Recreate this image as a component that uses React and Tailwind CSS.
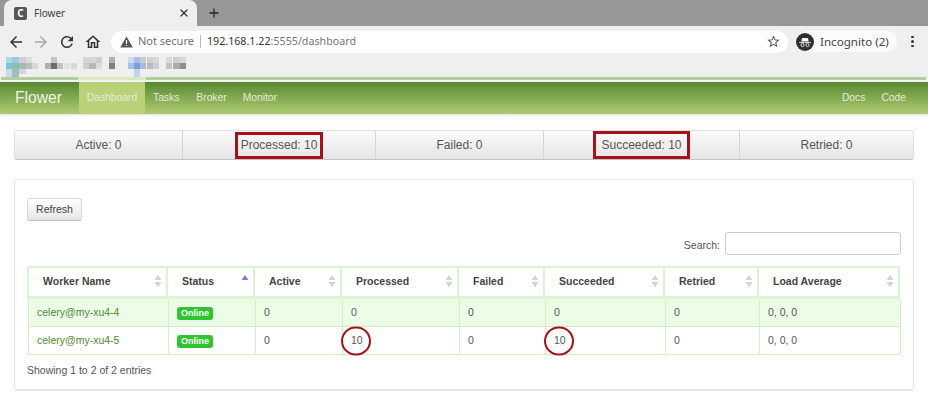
import { X, Plus } from "lucide-react";

const STATS = [
  { label: "Active: 0", width: "w-[168px]" },
  { label: "Processed: 10", width: "w-[193px]", marked: "h-[27px] w-[88px]" },
  { label: "Failed: 0", width: "w-[168px]" },
  { label: "Succeeded: 10", width: "w-[196px]", marked: "h-[28px] w-[97px]" },
  { label: "Retried: 0", width: "flex-1" },
];

const COLUMNS = [
  { label: "Worker Name", width: "w-[141px]" },
  { label: "Status", width: "w-[87px]", sorted: true },
  { label: "Active", width: "w-[87px]" },
  { label: "Processed", width: "w-[117px]" },
  { label: "Failed", width: "w-[86px]" },
  { label: "Succeeded", width: "w-[120px]" },
  { label: "Retried", width: "w-[94px]" },
  { label: "Load Average", width: "w-[141px]" },
];

const WORKERS = [
  { name: "celery@my-xu4-4", processed: "0", succeeded: "0", marked: false, bg: "bg-[#ecfde7]" },
  { name: "celery@my-xu4-5", processed: "10", succeeded: "10", marked: true, bg: "bg-white" },
];

// blurred bookmark bar, [x, y, w, h, colour]
const BLUR = [
  [6, 0, 6, 6, "#a9dbe6"], [12, 0, 7, 6, "#9ccbdc"], [19, 0, 7, 6, "#cfcfcf"], [26, 0, 6, 6, "#dedede"],
  [6, 6, 6, 6, "#7fc3d8"], [12, 6, 7, 6, "#82c6a6"], [19, 6, 7, 6, "#a8b8b8"], [26, 6, 6, 6, "#bdbdbd"], [32, 6, 6, 6, "#d8d8d8"],
  [12, 12, 7, 8, "#9dbcc4"], [6, 12, 6, 8, "#c7dde3"], [19, 12, 7, 5, "#cfd8d8"],
  [51, 0, 6, 6, "#c4c4c4"], [45, 6, 6, 6, "#b0b0b0"], [51, 6, 6, 6, "#6d6d6d"], [57, 6, 6, 6, "#c2c2c2"], [64, 6, 6, 6, "#e2e2e2"], [71, 6, 6, 6, "#d8d8d8"],
  [83, 0, 6, 6, "#d4d4d4"], [89, 0, 7, 6, "#d8d8d8"], [96, 0, 6, 6, "#cdcdcd"], [83, 6, 6, 6, "#d0d0d0"], [89, 6, 7, 6, "#b8b8b8"], [96, 6, 6, 6, "#dcdcdc"],
  [109, 0, 6, 6, "#b0b0b0"], [109, 6, 6, 6, "#7e7e7e"],
  [128, 0, 6, 6, "#cfdcf0"], [134, 0, 6, 6, "#a8c0e4"], [140, 0, 6, 6, "#c0cce0"], [147, 0, 6, 6, "#d0d0d0"], [153, 0, 6, 6, "#d8d8d8"],
  [128, 6, 6, 6, "#a8bfe6"], [134, 6, 6, 6, "#7d9fd8"], [140, 6, 6, 6, "#a9bcdc"], [147, 6, 6, 6, "#bcbcbc"], [153, 6, 6, 6, "#cecece"],
  [134, 12, 6, 8, "#c4d4ee"], [166, 0, 6, 6, "#dadada"], [173, 0, 7, 6, "#cfcfcf"], [180, 0, 6, 6, "#d8d8d8"],
  [166, 6, 6, 6, "#c4c4c4"], [173, 6, 7, 6, "#ababab"], [180, 6, 6, 6, "#8f8f8f"],
];

function Icon({ d, size = 16, className }) {
  return (
    <svg width={size} height={size} viewBox="0 0 24 24" fill="currentColor" className={className}>
      <path d={d} />
    </svg>
  );
}

function SortArrows({ sorted }) {
  return (
    <svg width="8" height="13" viewBox="0 0 8 13" className="shrink-0">
      <path d="M4 0 L7.5 5 H0.5 Z" fill={sorted ? "#7b82d6" : "#d4d4d4"} />
      {!sorted && <path d="M4 12.5 L7.5 7 H0.5 Z" fill="#d4d4d4" />}
    </svg>
  );
}

function Marked({ children }) {
  return (
    <span className="relative inline-block">
      {children}
      <span className="absolute left-1/2 top-1/2 h-[29px] w-[30px] -translate-x-[16px] -translate-y-1/2 rounded-full border-[2.5px] border-[#a5121a]" />
    </span>
  );
}

function Browser() {
  return (
    <div className="font-['Noto_Sans',sans-serif] text-[#444]">
      <div className="flex h-[26px] bg-[#979797]">
        <div className="ml-[4px] flex w-[193px] items-center rounded-t-[8px] bg-[#efefef] pl-[10px] pr-[7px]">
          <span className="flex h-[13px] w-[13px] items-center justify-center rounded-[2px] bg-[#555] text-[10px] leading-none font-bold text-white">C</span>
          <span className="ml-[7px] flex-1 text-[10px] text-[#444]">Flower</span>
          <X size={12} strokeWidth={2.4} className="text-[#333]" />
        </div>
        <Plus size={14} strokeWidth={2.2} className="ml-[10px] mt-[6px] text-[#222]" />
      </div>
      <div className="flex h-[31px] items-center bg-[#efefef] pl-[7px] pr-[9px]">
        <Icon size={18} d="M20 11H7.83l5.59-5.59L12 4l-8 8 8 8 1.41-1.41L7.83 13H20v-2z" className="text-[#333]" />
        <Icon size={18} d="M12 4l-1.41 1.41L16.17 11H4v2h12.17l-5.58 5.59L12 20l8-8z" className="ml-[7px] text-[#a9a9a9]" />
        <Icon size={18} d="M17.65 6.35A7.958 7.958 0 0 0 12 4c-4.42 0-7.99 3.58-7.99 8s3.57 8 7.99 8c3.73 0 6.84-2.55 7.73-6h-2.08A5.99 5.99 0 0 1 12 18c-3.31 0-6-2.69-6-6s2.69-6 6-6c1.66 0 3.14.69 4.22 1.78L13 11h7V4l-2.35 2.35z" className="ml-[8px] text-[#333]" />
        <Icon size={18} d="M12 5.69l5 4.5V18h-2v-6H9v6H7v-7.81l5-4.5M12 3L2 12h3v8h6v-6h2v6h6v-8h3L12 3z" className="ml-[8px] text-[#333]" />
        <div className="ml-[9px] flex h-[22px] w-[677px] items-center rounded-full bg-white pl-[9px] pr-[7px] text-[11px]">
          <svg width="13" height="12" viewBox="0 0 13 12">
            <path d="M6.5 0.5 L12.8 11.5 H0.2 Z" fill="#555" />
            <rect x="5.9" y="4" width="1.2" height="4" fill="#fff" />
            <rect x="5.9" y="8.8" width="1.2" height="1.3" fill="#fff" />
          </svg>
          <span className="ml-[5px] text-[#707070]">Not secure</span>
          <span className="mx-[6px] h-[13px] w-px bg-[#bbb]" />
          <span className="flex-1 text-[10.7px]">
            <span className="text-[#333]">192.168.1.22</span>
            <span className="text-[#777]">:5555/dashboard</span>
          </span>
          <Icon size={15} d="M22 9.24l-7.19-.62L12 2 9.19 8.63 2 9.24l5.46 4.73L5.82 21 12 17.27 18.18 21l-1.63-7.03L22 9.24zM12 15.4l-3.76 2.27 1-4.28-3.32-2.88 4.38-.38L12 6.1l1.71 4.04 4.38.38-3.32 2.88 1 4.28L12 15.4z" className="text-[#555]" />
        </div>
        <div className="ml-[8px] flex h-[21px] w-[101px] items-center rounded-full bg-[#fbfbfb]">
          <svg width="18" height="18" viewBox="0 0 18 18">
            <circle cx="9" cy="9" r="9" fill="#303030" />
            <path d="M3 9 H15 V9.8 H3 Z M5.3 8.5 L6 5 H12 L12.7 8.5 Z" fill="#fff" />
            <circle cx="6.5" cy="12" r="1.6" fill="none" stroke="#fff" strokeWidth="0.8" />
            <circle cx="11.5" cy="12" r="1.6" fill="none" stroke="#fff" strokeWidth="0.8" />
          </svg>
          <span className="ml-[6px] text-[11.6px] text-[#444]">Incognito (2)</span>
        </div>
        <div className="ml-[14px] flex flex-col gap-[2px]">
          <span className="h-[2.5px] w-[2.5px] rounded-full bg-[#333]" />
          <span className="h-[2.5px] w-[2.5px] rounded-full bg-[#333]" />
          <span className="h-[2.5px] w-[2.5px] rounded-full bg-[#333]" />
        </div>
      </div>
      <div className="h-[20px] bg-[#efefef]">
        <svg width="200" height="20" viewBox="0 0 200 20" className="block">
          {BLUR.map(([x, y, w, h, c], i) => (
            <rect key={i} x={x} y={y} width={w} height={h} fill={c} />
          ))}
        </svg>
      </div>
      <div className="flex h-[3px] bg-[#efefef]">
        <div className="ml-px w-[77px] bg-[#b5cc9f]" />
        <div className="w-[68px] bg-[#dce7c0]" />
        <div className="w-[780px] bg-[#b5cc9f]" />
      </div>
      <div className="h-[2px] bg-[#f4f4f4]" />
    </div>
  );
}

function Navbar() {
  return (
    <div className="flex h-[32px] items-stretch bg-gradient-to-b from-[#598a32] to-[#afcb72] pl-[15px] pr-[22px] font-['Liberation_Sans',sans-serif] text-[10.3px] text-[#e4ecd6] shadow-[0_1px_2px_rgba(0,0,0,0.15)]">
      <span className="w-[64px] self-center text-[15.7px] text-[#eef4e4]">Flower</span>
      <span className="flex w-[66px] items-center justify-center bg-[#b9d27a]">Dashboard</span>
      <span className="ml-[8px] self-center">Tasks</span>
      <span className="ml-[17px] self-center">Broker</span>
      <span className="ml-[16px] self-center">Monitor</span>
      <span className="ml-auto self-center">Docs</span>
      <span className="ml-[16px] self-center">Code</span>
    </div>
  );
}

function StatsBar() {
  return (
    <div className="flex h-[30px] rounded-[3px] border border-[#e2e2e2] border-b-[#c4c4c4] bg-gradient-to-b from-[#fbfbfb] to-[#e5e5e5] text-[12px] text-[#555]">
      {STATS.map((s) => (
        <div key={s.label} className={`flex items-center justify-center border-r border-[#d4d4d4] last:border-r-0 ${s.width}`}>
          {s.marked ? (
            <span className={`flex items-center justify-center border-[3px] border-[#a5121a] ${s.marked}`}>{s.label}</span>
          ) : (
            s.label
          )}
        </div>
      ))}
    </div>
  );
}

function WorkersTable() {
  return (
    <div className="text-[10.5px] text-[#555]">
      <table className="w-[873px] table-fixed border-separate border-spacing-0">
        <thead>
          <tr>
            {COLUMNS.map((c, i) => (
              <th
                key={c.label}
                className={`h-[33px] border-y-2 border-r-2 border-y-[#dcf4d2] border-r-[#dcf4d2] border-b-[3px] bg-white p-0 text-left font-bold text-[#444] ${c.width} ${i === 0 ? "rounded-tl-[2px] border-l-2 border-l-[#dcf4d2]" : ""} ${i === 7 ? "rounded-tr-[2px]" : ""}`}
              >
                <div className="flex items-center justify-between pb-[2px] pl-[14px] pr-[4px]">
                  {c.label}
                  <SortArrows sorted={c.sorted} />
                </div>
              </th>
            ))}
          </tr>
        </thead>
      </table>
      <table className="ml-px w-[873px] table-fixed border-separate border-spacing-0">
        <colgroup>
          {COLUMNS.map((c) => (
            <col key={c.label} className={c.width} />
          ))}
        </colgroup>
        <tbody>
          {WORKERS.map((w) => (
            <tr key={w.name} className={w.bg}>
              <td className="h-[28px] border-x border-b border-[#d3efc4] pl-[8px] text-[#4f8a2f]">{w.name}</td>
              <td className="border-r border-b border-[#d3efc4] pl-[8px]">
                <span className="inline-block rounded-[3px] bg-[#2ec52e] px-[4px] py-[1px] text-[9px] leading-[11px] font-bold text-white">Online</span>
              </td>
              <td className="border-r border-b border-[#d3efc4] pl-[8px]">0</td>
              <td className="border-r border-b border-[#d3efc4] pl-[8px]">{w.marked ? <Marked>{w.processed}</Marked> : w.processed}</td>
              <td className="border-r border-b border-[#d3efc4] pl-[8px]">0</td>
              <td className="border-r border-b border-[#d3efc4] pl-[8px]">{w.marked ? <Marked>{w.succeeded}</Marked> : w.succeeded}</td>
              <td className="border-r border-b border-[#d3efc4] pl-[8px]">0</td>
              <td className="border-r border-b border-[#d3efc4] pl-[8px]">0, 0, 0</td>
            </tr>
          ))}
        </tbody>
      </table>
    </div>
  );
}

export default function App() {
  return (
    <div className="h-[404px] w-[928px] overflow-hidden bg-white">
      <Browser />
      <Navbar />
      <div className="px-[14px] pt-[16px] font-['Liberation_Sans',sans-serif]">
        <StatsBar />
        <div className="mt-[19px] h-[212px] rounded-[3px] border border-[#e8e8e8] border-b-2 px-[12px] pt-[16px]">
          <button className="h-[23px] w-[55px] rounded-[3px] border border-[#d8d8d8] border-b-[#bbb] bg-gradient-to-b from-white to-[#e6e6e6] text-[10.5px] text-[#444]">
            Refresh
          </button>
          <div className="mt-[11px] flex items-center justify-end text-[10.5px] text-[#555]">
            <span className="mt-[4px]">Search:</span>
            <input className="ml-[5px] h-[23px] w-[176px] rounded-[3px] border border-[#ccc] bg-white" />
          </div>
          <div className="mt-[11px]">
            <WorkersTable />
          </div>
          <p className="mt-[8px] text-[10.5px] text-[#555]">Showing 1 to 2 of 2 entries</p>
        </div>
      </div>
    </div>
  );
}
